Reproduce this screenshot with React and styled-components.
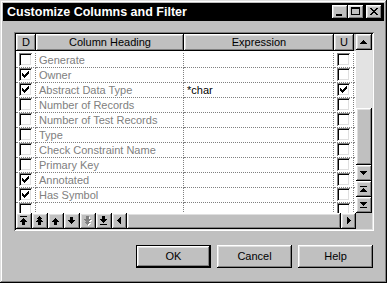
import React from 'react';
import styled, { createGlobalStyle, css } from 'styled-components';

const GlobalStyle = createGlobalStyle`
  html, body {
    margin: 0;
    padding: 0;
    background: #c0c0c0;
  }
  body {
    font-family: "Liberation Sans", Arial, sans-serif;
    font-size: 11px;
  }
  * {
    box-sizing: border-box;
  }
`;

const raised = css`
  background: #c0c0c0;
  box-shadow: inset -1px -1px #000, inset 1px 1px #fff, inset -2px -2px #808080,
    inset 2px 2px #dfdfdf;
`;

const Window = styled.div`
  width: 387px;
  height: 283px;
  padding: 3px;
  display: flex;
  flex-direction: column;
  background: #c0c0c0;
  box-shadow: inset -1px -1px #000, inset 1px 1px #dfdfdf, inset -2px -2px #808080,
    inset 2px 2px #fff;
`;

const TitleBar = styled.div`
  height: 18px;
  display: flex;
  align-items: center;
  padding: 0 2px 0 4px;
  background: #000;
  color: #fff;
  font-weight: bold;
  font-size: 12.5px;
`;

const Title = styled.span`
  flex: 1;
  white-space: nowrap;
`;

const TitleButtons = styled.div`
  display: flex;
  align-items: center;
`;

const TitleButton = styled.div`
  ${raised};
  width: 16px;
  height: 14px;
  margin-left: ${(p) => (p.$gap ? '2px' : '0')};
  display: flex;
`;

const Body = styled.div`
  flex: 1;
  display: flex;
  flex-direction: column;
  padding: 11px 10px 0 11px;
`;

const Frame = styled.div`
  width: 360px;
  height: 199px;
  padding: 2px;
  display: grid;
  grid-template-columns: 340px 16px;
  grid-template-rows: 179px 16px;
  background: #c0c0c0;
  box-shadow: inset 1px 1px #808080, inset -1px -1px #fff, inset 2px 2px #000,
    inset -2px -2px #dfdfdf;
`;

const Table = styled.div`
  display: flex;
  flex-direction: column;
  background: #fff;
  overflow: hidden;
`;

const columns = '20px 148px 150px 20px 1fr';

const HeaderRow = styled.div`
  display: grid;
  grid-template-columns: ${columns};
  height: 17px;
  flex-shrink: 0;
  background: #c0c0c0;
`;

const HeaderCell = styled.div`
  ${raised};
  display: flex;
  align-items: center;
  justify-content: center;
  color: #000;
  line-height: 1;
  padding-bottom: 1px;
`;

const Rows = styled.div`
  flex: 1;
  padding-top: 2px;
  overflow: hidden;
`;

const Row = styled.div`
  display: grid;
  grid-template-columns: ${columns};
  height: 15px;
`;

const Cell = styled.div`
  border-bottom: 1px dotted #808080;
  border-right: ${(p) => (p.$last ? 'none' : '1px dotted #808080')};
  overflow: hidden;
  white-space: nowrap;
  line-height: 14px;
  padding-left: ${(p) => (p.$check ? '0' : '3px')};
  color: ${(p) => (p.$muted ? '#808080' : '#000')};
  display: ${(p) => (p.$check ? 'flex' : 'block')};
  justify-content: center;
  align-items: flex-start;
`;

const Box = styled.span`
  width: 13px;
  height: 13px;
  display: block;
  background: #fff;
  box-shadow: inset 1px 1px #808080, inset -1px -1px #fff, inset 2px 2px #000,
    inset -2px -2px #dfdfdf;
`;

const VScroll = styled.div`
  display: flex;
  flex-direction: column;
`;

const ScrollButton = styled.div`
  ${raised};
  width: ${(p) => p.$w || 16}px;
  height: 16px;
  flex-shrink: 0;
  display: flex;
`;

const Track = styled.div`
  flex: 1;
  display: flex;
  flex-direction: column;
  justify-content: flex-end;
  background: #e3e3e3;
`;

const VThumb = styled.div`
  ${raised};
  height: 57px;
`;

const BottomBar = styled.div`
  display: flex;
`;

const HThumb = styled.div`
  ${raised};
  flex: 1;
`;

const Corner = styled.div`
  background: #c0c0c0;
`;

const Actions = styled.div`
  display: flex;
  justify-content: flex-end;
  gap: 6px;
  margin-top: 14px;
  padding-right: 1px;
`;

const Button = styled.button`
  width: 75px;
  height: 23px;
  padding: 0 0 1px;
  border: none;
  font-family: "Liberation Sans", Arial, sans-serif;
  font-size: 11px;
  color: #000;
  ${raised};
  ${(p) =>
    p.$default &&
    css`
      box-shadow: inset 0 0 0 1px #000, inset -2px -2px #000, inset 2px 2px #fff,
        inset -3px -3px #808080, inset 3px 3px #dfdfdf;
    `}
`;

/* pixel drawing helpers for the little glyphs */
const px = (x, y, w = 1, h = 1) => `M${x} ${y}h${w}v${h}h${-w}z`;
const range = (n) => Array.from({ length: n }, (_, i) => i);
const triUp = (cx, top, n) => range(n).map((i) => px(cx - i, top + i, 2 * i + 1)).join('');
const triDown = (cx, top, n) =>
  range(n).map((i) => px(cx - (n - 1 - i), top + i, 2 * (n - 1 - i) + 1)).join('');
const triLeft = (left, cy, n) => range(n).map((i) => px(left + i, cy - i, 1, 2 * i + 1)).join('');
const triRight = (left, cy, n) =>
  range(n).map((i) => px(left + i, cy - (n - 1 - i), 1, 2 * (n - 1 - i) + 1)).join('');

const glyphs = {
  toTop: px(4, 3, 7, 1) + triUp(7, 5, 4) + px(6, 9, 3, 3),
  fastUp: triUp(7, 3, 3) + triUp(7, 5, 4) + px(6, 9, 3, 3),
  up: triUp(7, 5, 4) + px(6, 9, 3, 3),
  down: px(6, 4, 3, 3) + triDown(7, 7, 4),
  fastDown: px(6, 3, 3, 3) + triDown(7, 6, 4) + triDown(7, 9, 3),
  toBottom: px(6, 3, 3, 3) + triDown(7, 6, 4) + px(4, 11, 7, 1),
  sUp: triUp(7, 6, 4),
  sDown: triDown(7, 6, 4),
  sTop: px(4, 5, 7, 1) + triUp(7, 7, 4),
  sBottom: triDown(7, 5, 4) + px(4, 10, 7, 1),
  sLeft: triLeft(5, 7, 4),
  sRight: triRight(6, 7, 4),
  minimize: px(4, 9, 6, 2),
  maximize: px(3, 2, 9, 2) + px(3, 4, 1, 6) + px(11, 4, 1, 6) + px(3, 9, 9, 1),
  close:
    px(4, 3, 2) + px(10, 3, 2) + px(5, 4, 2) + px(9, 4, 2) + px(6, 5, 4) + px(7, 6, 2) +
    px(6, 7, 4) + px(5, 8, 2) + px(9, 8, 2) + px(4, 9, 2) + px(10, 9, 2),
};

const checkPath = [2, 3, 4, 3, 2, 1, 0].map((y, x) => px(x + 3, y + 3, 1, 3)).join('');

const Glyph = ({ name, w = 16, h = 16, disabled }) => (
  <svg width={w} height={h} viewBox={`0 0 ${w} ${h}`} shapeRendering="crispEdges">
    {disabled && <path d={glyphs[name]} fill="#fff" transform="translate(1 1)" />}
    <path d={glyphs[name]} fill={disabled ? '#808080' : '#000'} />
  </svg>
);

const Check = ({ on }) => (
  <Box>
    {on && (
      <svg width="13" height="13" viewBox="0 0 13 13" shapeRendering="crispEdges">
        <path d={checkPath} fill="#000" />
      </svg>
    )}
  </Box>
);

const rows = [
  { d: false, name: 'Generate' },
  { d: true, name: 'Owner' },
  { d: true, name: 'Abstract Data Type', expr: '*char', u: true },
  { d: false, name: 'Number of Records' },
  { d: false, name: 'Number of Test Records' },
  { d: false, name: 'Type' },
  { d: false, name: 'Check Constraint Name' },
  { d: false, name: 'Primary Key' },
  { d: true, name: 'Annotated' },
  { d: true, name: 'Has Symbol' },
  { d: false, name: '' },
];

const tools = ['toTop', 'fastUp', 'up', 'down', 'fastDown', 'toBottom'];

export default function App() {
  return (
    <>
      <GlobalStyle />
      <Window>
        <TitleBar>
          <Title>Customize Columns and Filter</Title>
          <TitleButtons>
            <TitleButton>
              <Glyph name="minimize" h={14} />
            </TitleButton>
            <TitleButton>
              <Glyph name="maximize" h={14} />
            </TitleButton>
            <TitleButton $gap>
              <Glyph name="close" h={14} />
            </TitleButton>
          </TitleButtons>
        </TitleBar>
        <Body>
          <Frame>
            <Table>
              <HeaderRow>
                <HeaderCell>D</HeaderCell>
                <HeaderCell>Column Heading</HeaderCell>
                <HeaderCell>Expression</HeaderCell>
                <HeaderCell>U</HeaderCell>
              </HeaderRow>
              <Rows>
                {rows.map((r, i) => (
                  <Row key={i}>
                    <Cell $check>
                      <Check on={r.d} />
                    </Cell>
                    <Cell $muted>{r.name}</Cell>
                    <Cell>{r.expr}</Cell>
                    <Cell $check>
                      <Check on={r.u} />
                    </Cell>
                    <Cell $last />
                  </Row>
                ))}
              </Rows>
            </Table>
            <VScroll>
              <ScrollButton>
                <Glyph name="sUp" />
              </ScrollButton>
              <Track>
                <VThumb />
              </Track>
              <ScrollButton>
                <Glyph name="sDown" />
              </ScrollButton>
              <ScrollButton>
                <Glyph name="sTop" />
              </ScrollButton>
              <ScrollButton>
                <Glyph name="sBottom" />
              </ScrollButton>
            </VScroll>
            <BottomBar>
              {tools.map((t) => (
                <ScrollButton key={t}>
                  <Glyph name={t} disabled={t === 'fastDown'} />
                </ScrollButton>
              ))}
              <ScrollButton $w={15}>
                <Glyph name="sLeft" w={15} />
              </ScrollButton>
              <HThumb />
              <ScrollButton $w={15}>
                <Glyph name="sRight" w={15} />
              </ScrollButton>
            </BottomBar>
            <Corner />
          </Frame>
          <Actions>
            <Button $default>OK</Button>
            <Button>Cancel</Button>
            <Button>Help</Button>
          </Actions>
        </Body>
      </Window>
    </>
  );
}
